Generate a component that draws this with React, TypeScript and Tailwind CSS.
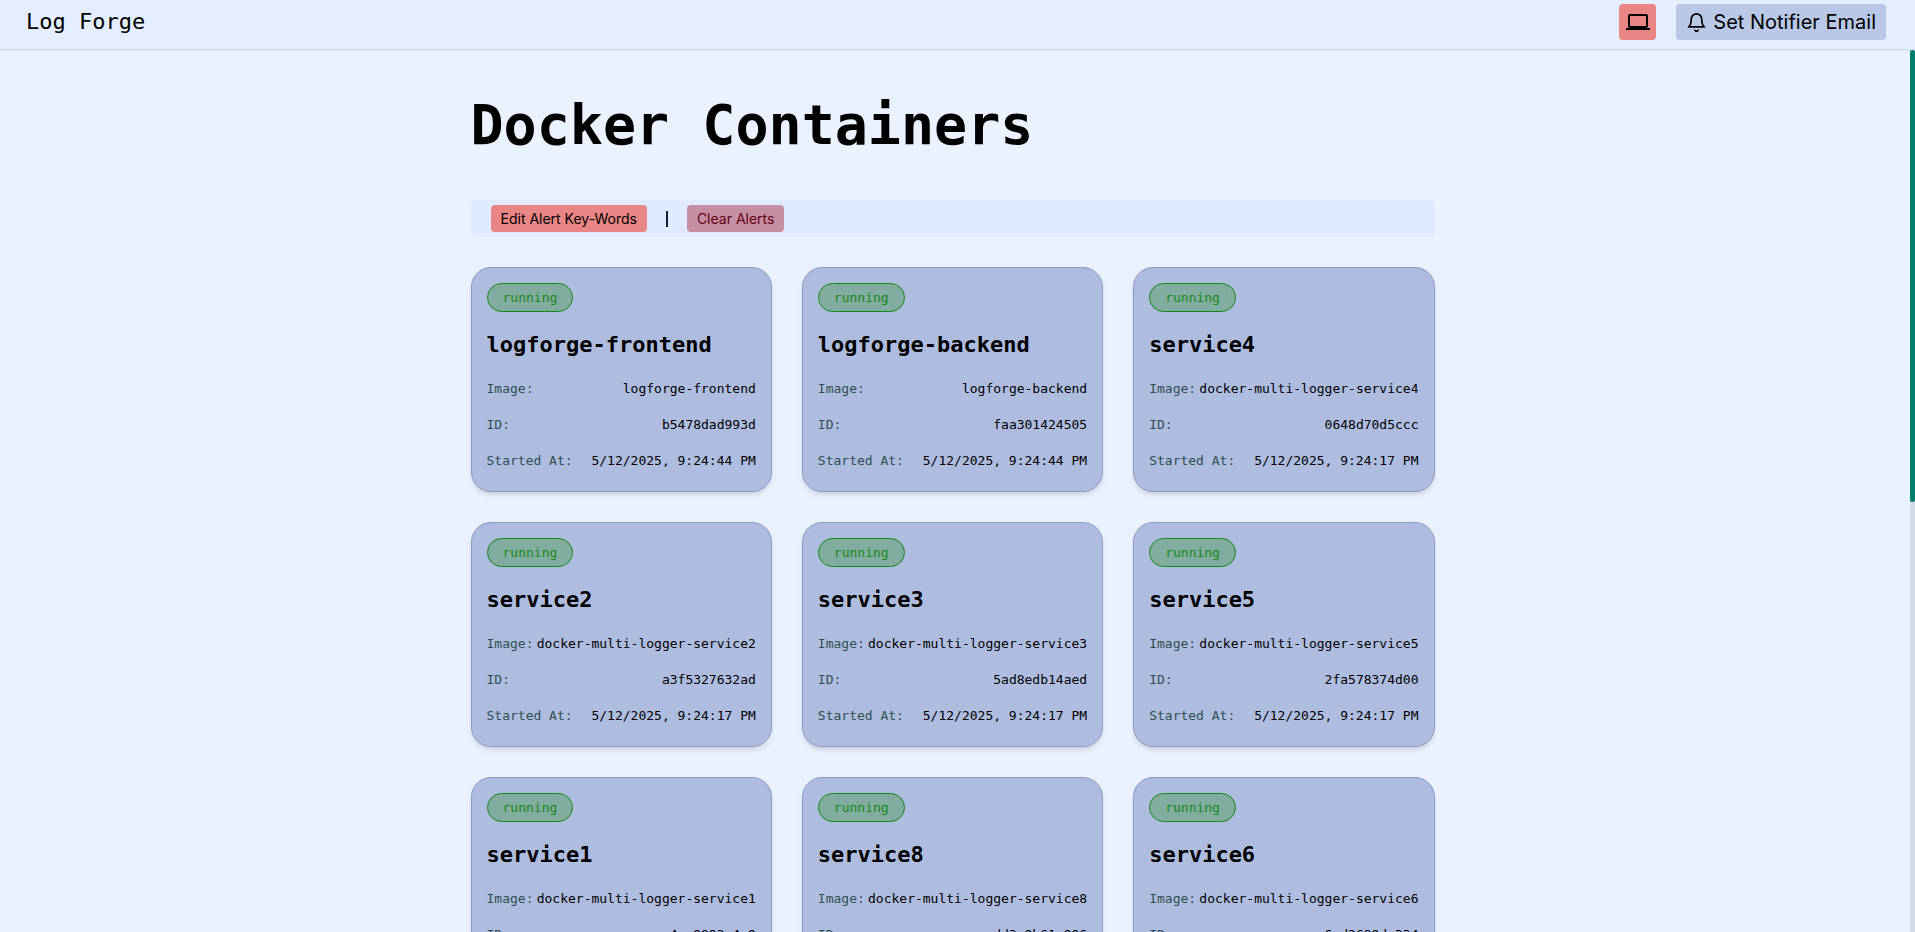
import { MdLaptop } from "react-icons/md";

interface Container {
  name: string;
  image: string;
  id: string;
  startedAt: string;
}

const containers: Container[] = [
  { name: "logforge-frontend", image: "logforge-frontend", id: "b5478dad993d", startedAt: "5/12/2025, 9:24:44 PM" },
  { name: "logforge-backend", image: "logforge-backend", id: "faa301424505", startedAt: "5/12/2025, 9:24:44 PM" },
  { name: "service4", image: "docker-multi-logger-service4", id: "0648d70d5ccc", startedAt: "5/12/2025, 9:24:17 PM" },
  { name: "service2", image: "docker-multi-logger-service2", id: "a3f5327632ad", startedAt: "5/12/2025, 9:24:17 PM" },
  { name: "service3", image: "docker-multi-logger-service3", id: "5ad8edb14aed", startedAt: "5/12/2025, 9:24:17 PM" },
  { name: "service5", image: "docker-multi-logger-service5", id: "2fa578374d00", startedAt: "5/12/2025, 9:24:17 PM" },
  { name: "service1", image: "docker-multi-logger-service1", id: "a4ec9893c4a9", startedAt: "5/12/2025, 9:24:17 PM" },
  { name: "service8", image: "docker-multi-logger-service8", id: "dd3e9b61e996", startedAt: "5/12/2025, 9:24:17 PM" },
  { name: "service6", image: "docker-multi-logger-service6", id: "6ed2689da334", startedAt: "5/12/2025, 9:24:17 PM" },
];

const BellIcon = () => (
  <svg
    viewBox="0 0 24 24"
    className="size-[21px]"
    fill="none"
    stroke="currentColor"
    strokeWidth="2"
    strokeLinecap="round"
    strokeLinejoin="round"
  >
    <path d="M6 8a6 6 0 0 1 12 0c0 7 3 9 3 9H3s3-2 3-9" />
    <path d="M10.3 21a1.94 1.94 0 0 0 3.4 0" />
  </svg>
);

const Row = ({ label, value }: { label: string; value: string }) => (
  <div className="flex justify-between text-[13px] leading-[21px]">
    <dt className="text-[#2f4f4f]">{label}</dt>
    <dd>{value}</dd>
  </div>
);

const ContainerCard = ({ name, image, id, startedAt }: Container) => (
  <article className="flex flex-col items-start gap-[15px] rounded-[20px] border border-[#8c9bc0] bg-[#aebddf] px-[15px] pt-[15px] pb-5 shadow-md">
    <span className="rounded-full border border-[#148a14] bg-[#82ac9f] px-[15px] py-[3px] text-[13px] leading-[21px] text-[#148a14]">
      running
    </span>
    <h2 className="text-[22px] leading-9 font-bold">{name}</h2>
    <dl className="flex w-full flex-col gap-[15px]">
      <Row label="Image:" value={image} />
      <Row label="ID:" value={id} />
      <Row label="Started At:" value={startedAt} />
    </dl>
  </article>
);

export default function App() {
  return (
    <div className="flex h-screen flex-col overflow-hidden bg-[#eaf1ff] font-['DejaVu_Sans_Mono',monospace] text-black">
      <header className="z-10 flex items-start justify-between border-b border-[#cfdcec] bg-[#e4eeff] pt-1 pr-[29px] pb-[9px] pl-[26px] shadow-xs">
        <span className="text-[22px] leading-9">Log Forge</span>
        <div className="flex gap-5 font-[Inter,sans-serif]">
          <button aria-label="Toggle theme" className="flex h-9 w-[37px] items-center justify-center rounded bg-[#ea8585]">
            <MdLaptop className="size-6" />
          </button>
          <button className="flex h-9 items-center gap-[6px] rounded bg-[#b8c8e6] px-[10px] text-xl">
            <BellIcon />
            Set Notifier Email
          </button>
        </div>
      </header>

      <div className="flex min-h-0 flex-1">
        <main className="min-w-0 flex-1 overflow-hidden pr-[5px]">
          <div className="mx-auto flex max-w-5xl flex-col gap-[30px] px-[30px] pt-[35px]">
            <h1 className="mb-[5px] text-[55px] leading-[80px] font-bold">Docker Containers</h1>
            <div className="flex h-[37px] items-center rounded bg-[#e0ebff] px-5 font-[Inter,sans-serif] text-sm">
              <button className="h-[27px] rounded bg-[#ea8585] px-[10px]">Edit Alert Key-Words</button>
              <span className="mx-[19px] h-4 w-[2px] bg-[#16203c]" />
              <button className="h-[27px] rounded bg-[#c48ea3] px-[10px] text-[#640010]">Clear Alerts</button>
            </div>
            <section className="grid grid-cols-3 gap-[30px]">
              {containers.map((container) => (
                <ContainerCard key={container.name} {...container} />
              ))}
            </section>
          </div>
        </main>
        <div className="w-[5px] bg-[#d2daea]">
          <div className="h-[51.3%] rounded-sm bg-[#027e6f]" />
        </div>
      </div>
    </div>
  );
}
